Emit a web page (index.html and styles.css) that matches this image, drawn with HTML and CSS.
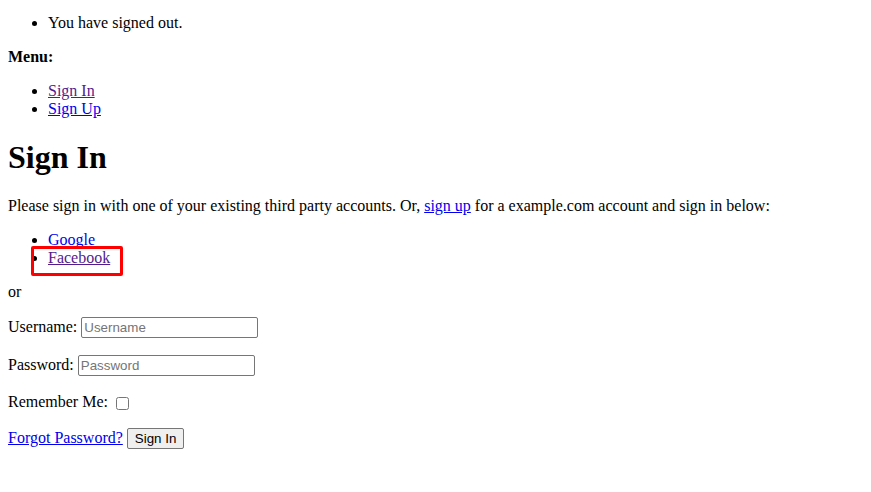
FILE: index.html
```html
<!DOCTYPE html>
<html lang="en">
<head>
    <meta charset="UTF-8">
    <title>Sign In</title>
    <link rel="stylesheet" href="styles.css">
</head>
<body>
    <ul class="messages">
        <li>You have signed out.</li>
    </ul>

    <div class="menu">
        <strong>Menu:</strong>
        <ul>
            <li><a href="#" class="visited">Sign In</a></li>
            <li><a href="#">Sign Up</a></li>
        </ul>
    </div>

    <h1>Sign In</h1>

    <p>Please sign in with one of your existing third party accounts. Or, <a href="#">sign up</a> for a example.com account and sign in below:</p>

    <div class="socialaccount-ballot">
        <ul class="socialaccount-providers">
            <li><a href="#">Google</a></li>
            <li class="highlighted"><a href="#" class="visited">Facebook</a></li>
        </ul>
        <div class="login-or">or</div>
    </div>

    <form class="login" method="post" action="#">
        <p><label for="id_login">Username:</label> <input type="text" id="id_login" class="field" placeholder="Username"></p>
        <p><label for="id_password">Password:</label> <input type="password" id="id_password" class="field" placeholder="Password"></p>
        <p class="last"><label for="id_remember">Remember Me:</label> <input type="checkbox" id="id_remember"></p>
        <a href="#" class="secondaryAction">Forgot Password?</a>
        <button class="primaryAction" type="submit">Sign In</button>
    </form>
</body>
</html>
```

FILE: styles.css
```css
body {
    margin: 8px;
    font-family: "Liberation Serif", "Times New Roman", serif;
    font-size: 16px;
    color: #000;
    background: #fff;
}

a {
    color: #0000ee;
}

a.visited {
    color: #551a8b;
}

.messages {
    margin-top: 6px;
}

h1 {
    font-size: 32px;
    margin: 21px 0;
}

/* Рамка вокруг пункта Facebook */
.socialaccount-providers li.highlighted {
    position: relative;
}

.socialaccount-providers li.highlighted::after {
    content: "";
    position: absolute;
    left: -17px;
    top: -3px;
    width: 86px;
    height: 24px;
    border: 3px solid #f00;
    border-radius: 2px;
}

.login p {
    margin: 16px 0 17px;
}

.login p.last {
    margin-bottom: 15px;
}

.field {
    font-family: "Liberation Sans", Arial, sans-serif;
    font-size: 13.33px;
    padding: 2px 2px;
    border: 1px solid #767676;
    border-radius: 2px;
    width: 171px;
}

.field::placeholder {
    color: #757575;
}

input[type="checkbox"] {
    width: 13px;
    height: 13px;
    margin: 3px 3px 3px 4px;
    vertical-align: middle;
}

.primaryAction {
    font-family: "Liberation Sans", Arial, sans-serif;
    font-size: 13.33px;
    padding: 2px 7px;
    background: #efefef;
    border: 1px solid #767676;
    border-radius: 2px;
    color: #000;
}
```
